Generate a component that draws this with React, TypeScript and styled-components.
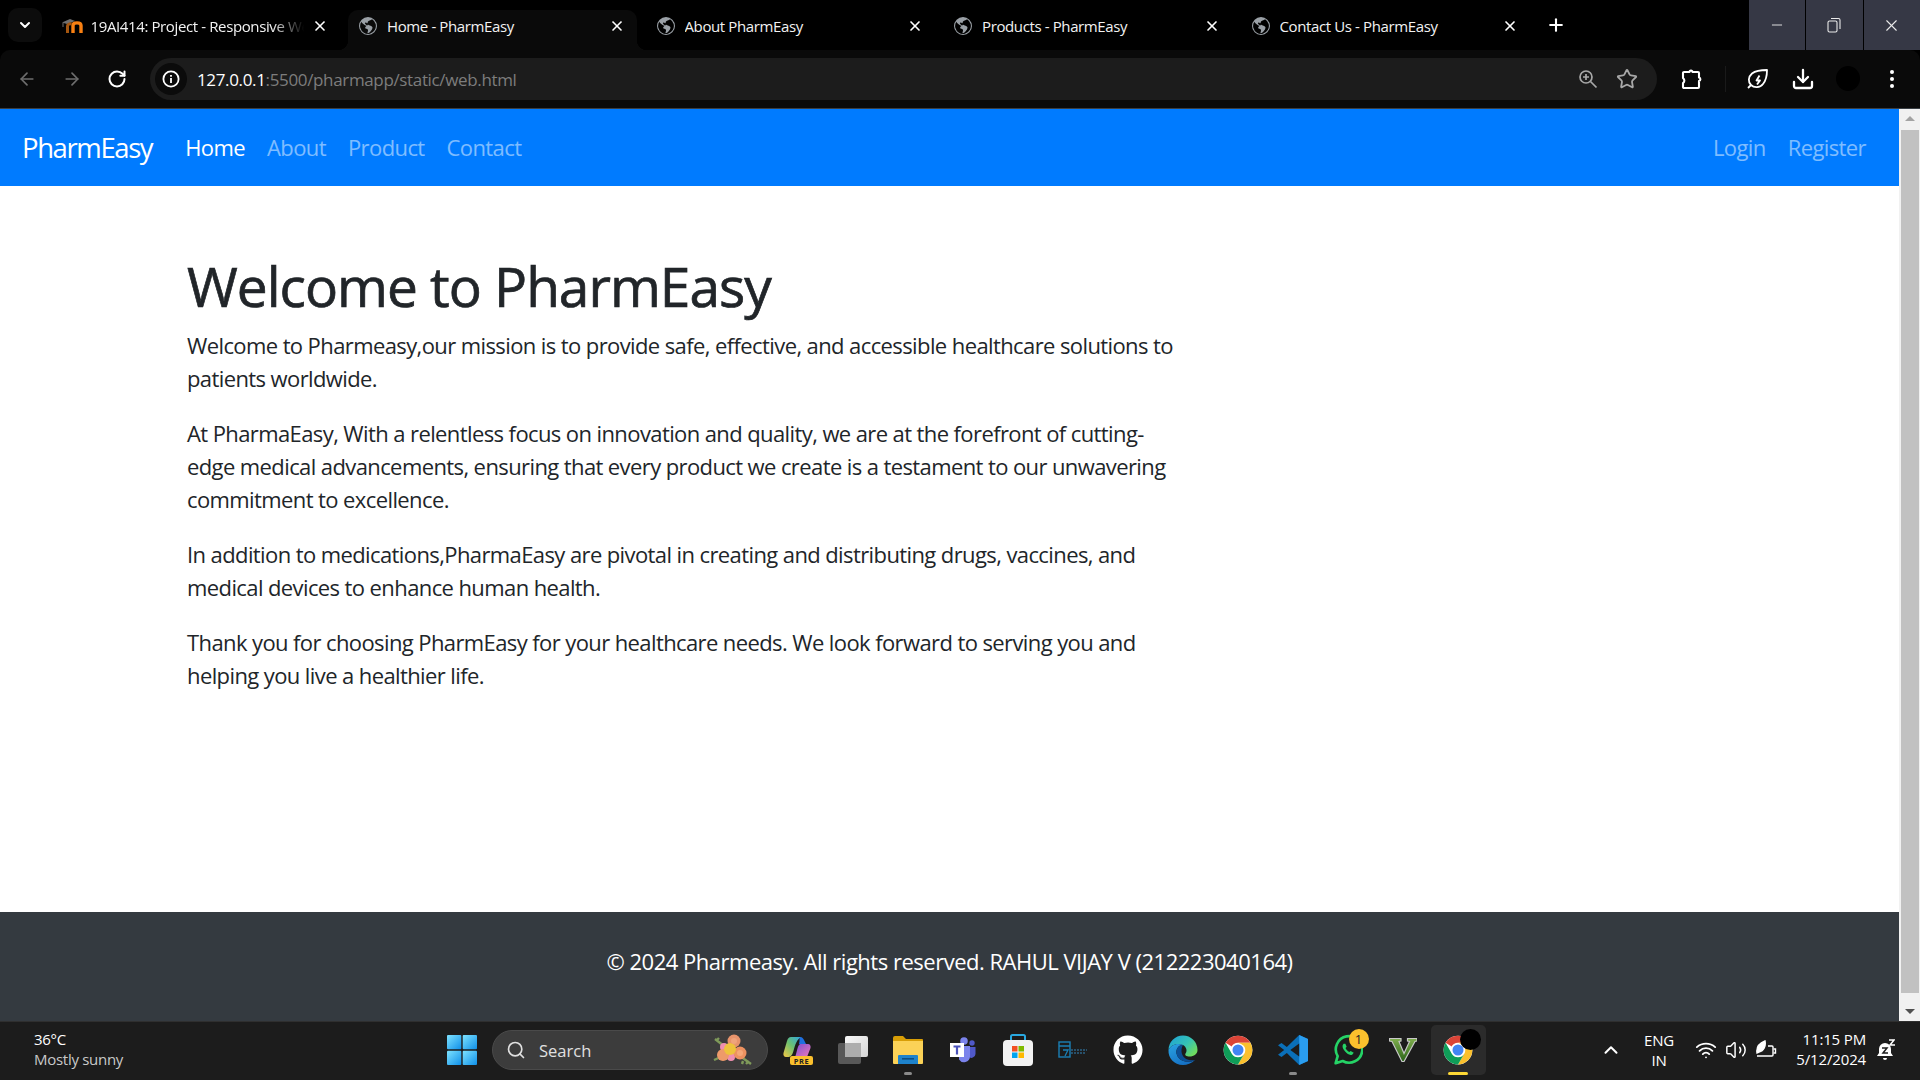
import React from "react";
import styled, { createGlobalStyle } from "styled-components";
import { ArrowLeft, ArrowRight, RotateCw, X, Plus, Minus, ChevronDown, ChevronUp, Search, Star, Download, Wifi, Volume2 } from "lucide-react";
import { BsGlobeAmericas } from "react-icons/bs";
import { FaGithub } from "react-icons/fa";

const SEGOE = `"Open Sans", "Noto Sans", "Liberation Sans", sans-serif`;

const Global = createGlobalStyle`
  html, body { margin: 0; padding: 0; background: #000; overflow: hidden; }
  * { box-sizing: border-box; }
  body { font-family: ${SEGOE}; }
`;

const Screen = styled.div`
  width: 1920px;
  height: 1080px;
  display: flex;
  flex-direction: column;
  overflow: hidden;
`;

const TabStrip = styled.div`
  height: 50px;
  background: #000;
  display: flex;
  align-items: flex-end;
  flex: none;
`;
const TabSearch = styled.div`
  width: 34px;
  height: 34px;
  margin: 0 8.5px 8px 8px;
  border-radius: 10px;
  background: #0c0c0c;
  color: #fff;
  display: flex;
  align-items: center;
  justify-content: center;
`;
const Tab = styled.div<{ $active?: boolean; $gap?: number }>`
  position: relative;
  width: 289px;
  height: 40px;
  margin-right: 8.5px;
  display: flex;
  align-items: center;
  padding: 0 12px 9px 11px;
  color: #f2f2f2;
  background: ${(p) => (p.$active ? "#0a0a0a" : "transparent")};
  border-radius: 10px 10px 0 0;
  gap: ${(p) => p.$gap ?? 10}px;
  flex: none;
  ${(p) =>
    p.$active &&
    `
    &::before, &::after {
      content: "";
      position: absolute;
      bottom: 0;
      width: 10px;
      height: 10px;
    }
    &::before { left: -10px; background: radial-gradient(circle at 0 0, transparent 10px, #0a0a0a 10.5px); }
    &::after { right: -10px; background: radial-gradient(circle at 100% 0, transparent 10px, #0a0a0a 10.5px); }
  `}
`;
const TabTitle = styled.span<{ $fade?: boolean }>`
  flex: 1;
  font-size: 15px;
  letter-spacing: -0.38px;
  white-space: nowrap;
  overflow: hidden;
  ${(p) => p.$fade && "mask-image: linear-gradient(90deg, #000 85%, transparent 100%);"}
`;
const NewTab = styled.div`
  width: 44px;
  height: 34px;
  margin: 0 0 8px -4.5px;
  color: #fff;
  display: flex;
  align-items: center;
  justify-content: center;
`;
const WindowControls = styled.div`
  margin-left: auto;
  align-self: flex-start;
  display: flex;
  gap: 1px;
`;
const WinBtn = styled.div`
  width: 56.5px;
  height: 50px;
  background: #363845;
  color: #eaeaea;
  display: flex;
  align-items: center;
  justify-content: center;
`;

const Toolbar = styled.div`
  height: 59px;
  flex: none;
  background: #0a0a0a;
  border-bottom: 1px solid #3a3f44;
  border-radius: 10px 10px 0 0;
  display: flex;
  align-items: center;
  padding-bottom: 1px;
`;
const NavIcons = styled.div`
  width: 150px;
  display: flex;
  align-items: center;
  padding-left: 17px;
  gap: 25px;
  flex: none;
`;
const NavIcon = styled.span<{ $dim?: boolean }>`
  width: 20px;
  height: 20px;
  display: flex;
  color: ${(p) => (p.$dim ? "#6e6e6e" : "#fff")};
`;
const Omnibox = styled.div`
  width: 1507px;
  height: 42px;
  border-radius: 21px;
  background: #1c1c1c;
  display: flex;
  align-items: center;
  padding: 0 19px 0 5px;
  flex: none;
`;
const InfoChip = styled.span`
  width: 32px;
  height: 32px;
  border-radius: 50%;
  background: #0b0b0b;
  display: flex;
  align-items: center;
  justify-content: center;
  flex: none;
`;
const Url = styled.div`
  margin-left: 10px;
  padding-top: 2px;
  font-size: 17px;
  letter-spacing: -0.35px;
  color: #7d7d7d;
  flex: 1;
`;
const UrlHost = styled.span`
  color: #fff;
`;
const OmniIcons = styled.div`
  display: flex;
  align-items: center;
  gap: 18px;
  color: #a8a8a8;
`;
const ToolIcons = styled.div`
  flex: 1;
  display: flex;
  align-items: center;
  color: #fff;
`;
const ToolSlot = styled.span<{ $w: number }>`
  width: ${(p) => p.$w}px;
  display: flex;
  justify-content: center;
  align-items: center;
  flex: none;
`;
const ToolDivider = styled.span`
  width: 1px;
  height: 26px;
  background: #1a1a1a;
  flex: none;
`;
const Avatar = styled.span`
  width: 24px;
  height: 25px;
  border-radius: 50%;
  background: #000;
`;

const Viewport = styled.div`
  flex: 1;
  min-height: 0;
  display: flex;
`;
const Page = styled.div`
  flex: 1;
  min-width: 0;
  display: flex;
  flex-direction: column;
  background: #fff;
  color: #212529;
`;
const Navbar = styled.nav`
  height: 77px;
  flex: none;
  background: #007bff;
  display: flex;
  align-items: center;
  padding: 0 22px 2px;
`;
const Brand = styled.a`
  font-size: 27.5px;
  letter-spacing: -1.4px;
  color: #fff;
  margin-right: 22px;
  line-height: 1.5;
  padding-top: 3px;
`;
const NavLink = styled.a<{ $active?: boolean }>`
  font-size: 22px;
  letter-spacing: -0.6px;
  padding: 0 11px;
  color: ${(p) => (p.$active ? "#fff" : "rgba(255,255,255,.5)")};
`;
const NavRight = styled.div`
  margin-left: auto;
  display: flex;
`;
const Main = styled.main`
  flex: 1;
  padding: 67px 0 0 187px;
`;
const Content = styled.div`
  width: 990px;
`;
const Title = styled.h1`
  font-size: 55px;
  font-weight: 500;
  line-height: 66px;
  letter-spacing: -1px;
  margin: 0 0 10px;
  -webkit-text-stroke: 0.7px #212529;
`;
const Para = styled.p`
  font-size: 22px;
  line-height: 33px;
  letter-spacing: -0.6px;
  margin: 0 0 22px;
`;
const Footer = styled.footer`
  height: 109px;
  flex: none;
  background: #343a40;
  color: #fff;
  font-size: 22px;
  letter-spacing: -0.49px;
  line-height: 33px;
  text-align: center;
  padding-top: 33px;
`;
const Scrollbar = styled.div`
  width: 21px;
  flex: none;
  background: #f1f1f1;
  display: flex;
  flex-direction: column;
  align-items: center;
  padding: 7px 1px 7px 2px;
`;
const Arrow = styled.span<{ $down?: boolean }>`
  width: 0;
  height: 0;
  border-left: 5px solid transparent;
  border-right: 5px solid transparent;
  ${(p) => (p.$down ? "border-top: 5px solid #505050;" : "border-bottom: 5px solid #a3a3a3;")}
  flex: none;
`;
const Thumb = styled.div`
  width: 100%;
  flex: 1;
  margin: 9px 0 16px;
  background: #c1c1c1;
`;

const Taskbar = styled.div`
  height: 59px;
  flex: none;
  background: #1c1c1c;
  border-top: 1px solid #2f2f2f;
  display: flex;
  align-items: center;
  padding-bottom: 2px;
  color: #fff;
`;
const Weather = styled.div`
  width: 447px;
  padding-left: 34px;
  flex: none;
  font-size: 15px;
  line-height: 20px;
  letter-spacing: -0.28px;
  margin-top: -2px;
`;
const WeatherSub = styled.div`
  color: #c9c9c9;
`;
const WinLogo = styled.span`
  display: flex;
  flex: none;
  width: 30px;
  margin-right: 15px;
`;
const SearchBox = styled.div`
  width: 276px;
  height: 40px;
  flex: none;
  border-radius: 20px;
  background: #3c3c3c;
  border: 1px solid #4a4a4a;
  display: flex;
  align-items: center;
  padding: 0 14px 0 13px;
  gap: 13px;
  color: #e0e0e0;
  font-size: 16.5px;
`;
const SearchLabel = styled.span`
  flex: 1;
`;
const Dock = styled.div`
  display: flex;
  align-items: center;
  flex: none;
  margin-left: 2.5px;
`;
const DockItem = styled.div<{ $active?: boolean }>`
  position: relative;
  width: 55px;
  height: 50px;
  display: flex;
  align-items: center;
  justify-content: center;
  border-radius: 5px;
  background: ${(p) => (p.$active ? "#2b2b2b" : "transparent")};
`;
const Pip = styled.span<{ $active?: boolean }>`
  position: absolute;
  bottom: 0;
  left: 50%;
  transform: translateX(-50%);
  width: ${(p) => (p.$active ? 20 : 8)}px;
  height: 3px;
  border-radius: 2px;
  background: ${(p) => (p.$active ? "#fdd835" : "#8a8a8a")};
`;
const Badge = styled.span`
  position: absolute;
  top: 4px;
  right: 7px;
  width: 20px;
  height: 20px;
  border-radius: 50%;
  background: #fbc02d;
  color: #222;
  font-size: 13px;
  text-align: center;
  line-height: 20px;
`;
const Blot = styled.span`
  position: absolute;
  top: 4px;
  right: 5px;
  width: 21px;
  height: 21px;
  border-radius: 50%;
  background: #000;
`;
const Tray = styled.div`
  margin-left: auto;
  display: flex;
  align-items: center;
  flex: none;
`;
const Lang = styled.div`
  width: 60px;
  margin-left: 7px;
  text-align: center;
  font-size: 15px;
  line-height: 20px;
  letter-spacing: -0.2px;
`;
const TrayIcons = styled.div`
  display: flex;
  align-items: center;
  gap: 8px;
  margin-left: 6px;
`;
const Clock = styled.div`
  width: 85px;
  margin-left: 4px;
  margin-top: -2px;
  text-align: right;
  font-size: 15px;
  line-height: 20px;
  letter-spacing: -0.15px;
`;
const BellSlot = styled.span`
  display: flex;
  margin: 0 25px 0 11px;
`;

const Globe = () => <BsGlobeAmericas size={18} color="#9aa0a6" />;

const MoodleIcon = () => (
  <svg width="21" height="15" viewBox="0 0 21 15">
    <path d="M0 4.500L8 1l5 2-8 3z" fill="#6f6f6f" />
    <path d="M1 5v4" stroke="#6f6f6f" strokeWidth="1" />
    <path d="M5.500 15V8c0-1.500 2-2.500 4-2" fill="none" stroke="#a5560f" strokeWidth="3" />
    <path d="M11 15V7.500C11 4 19 4 19 7.500V15" fill="none" stroke="#f98012" strokeWidth="3.400" />
  </svg>
);

const ZoomGlass = () => (
  <svg width="20" height="20" viewBox="0 0 20 20" fill="none" stroke="#a8a8a8" strokeWidth="1.7">
    <circle cx="8" cy="8" r="6" />
    <path d="M12.500 12.500L18.500 18.500" />
    <path d="M8 5v6M5 8h6" />
  </svg>
);
const PuzzleIcon = () => (
  <svg width="22" height="24" viewBox="0 0 22 24" fill="none" stroke="#fff" strokeWidth="2.100" strokeLinejoin="round">
    <path d="M4 5h5.500a1.500 1.500 0 0 1 3 0H18a1 1 0 0 1 1 1v4.500a1.800 1.800 0 0 1 0 3.500V20a1 1 0 0 1-1 1H4a1 1 0 0 1-1-1v-4a3 3 0 0 0 0-5V6a1 1 0 0 1 1-1z" />
  </svg>
);
const LeafBolt = () => (
  <svg width="24" height="24" viewBox="0 0 24 24" fill="none" stroke="#fff" strokeWidth="1.800" strokeLinejoin="round">
    <path d="M21 3c-5 0-11 .5-15 3.500C2 10 2 15 5 18c3 3 9 3 12-1 3-3.500 4-9 4-14z" />
    <path d="M13.500 8.500l-3 5h3.500l-3 4" />
    <path d="M5 18l-3 3" />
  </svg>
);
const Dots = () => (
  <svg width="6" height="20" viewBox="0 0 6 20" fill="#fff">
    <circle cx="3" cy="3" r="2" />
    <circle cx="3" cy="10" r="2" />
    <circle cx="3" cy="17" r="2" />
  </svg>
);
const InfoIcon = () => (
  <svg width="18" height="18" viewBox="0 0 18 18" fill="none" stroke="#fff" strokeWidth="1.800">
    <circle cx="9" cy="9" r="7.600" />
    <path d="M9 8v5M9 5v1.800" />
  </svg>
);
const RestoreIcon = () => (
  <svg width="14" height="16" viewBox="0 0 14 16" fill="none" stroke="#eaeaea" strokeWidth="1.100">
    <rect x="1" y="4" width="9" height="11" rx="1.500" />
    <path d="M4 1.500h7.500a1.500 1.500 0 0 1 1.500 1.500v9" />
  </svg>
);

const WindowsLogo = () => (
  <svg width="30" height="30" viewBox="0 0 30 30">
    <defs>
      <linearGradient id="wg" x1="0" y1="0" x2="1" y2="1">
        <stop offset="0" stopColor="#7ee3ff" />
        <stop offset="1" stopColor="#0f8fe8" />
      </linearGradient>
    </defs>
    <rect x="0" y="0" width="14.300" height="14.300" rx="1" fill="url(#wg)" />
    <rect x="15.700" y="0" width="14.300" height="14.300" rx="1" fill="url(#wg)" />
    <rect x="0" y="15.700" width="14.300" height="14.300" rx="1" fill="url(#wg)" />
    <rect x="15.700" y="15.700" width="14.300" height="14.300" rx="1" fill="url(#wg)" />
  </svg>
);
const Flowers = () => (
  <svg width="40" height="34" viewBox="0 0 40 34">
    <path d="M2 6l9 7M3 8l3-3M1 27l9-4M38 31L27 23M33 31l3-3M30 28l-1 3M22 5l3 6" stroke="#7f9a5a" strokeWidth="2.400" fill="none" />
    <circle cx="11" cy="14" r="4" fill="#ef8fb0" />
    <circle cx="18" cy="24" r="4" fill="#ef8fb0" />
    <circle cx="21" cy="8" r="6.500" fill="#e8946c" />
    <circle cx="10" cy="22" r="6" fill="#ee9a6a" />
    <circle cx="27" cy="20" r="6.500" fill="#ed9260" />
    <circle cx="17" cy="16" r="6" fill="#eec33c" />
    <circle cx="21" cy="8" r="3" fill="#f0a47c" />
    <circle cx="27" cy="20" r="3" fill="#f5a878" />
  </svg>
);
const CopilotIcon = () => (
  <svg width="30" height="29" viewBox="0 0 30 29">
    <defs>
      <linearGradient id="cp1" x1="0" y1="1" x2="1" y2="0">
        <stop offset="0" stopColor="#f6c945" />
        <stop offset="0.5" stopColor="#6cc070" />
        <stop offset="1" stopColor="#2aa5e8" />
      </linearGradient>
      <linearGradient id="cp2" x1="0" y1="0" x2="1" y2="1">
        <stop offset="0" stopColor="#7b4fd6" />
        <stop offset="1" stopColor="#ee7ab5" />
      </linearGradient>
    </defs>
    <path d="M8 1h11c-4 1-6 5-8 12-1 4-2 7-5 8H3c-2 0-3-2-2.500-4L4 5c1-3 2-4 4-4z" fill="url(#cp1)" />
    <path d="M17 1c2 0 3 1 4 3l2 4H16c1-3 0-6 1-7z" fill="#1f6fe0" />
    <path d="M17 8h8c2 0 3 2 2.500 4L24 21H12c2-4 2-11 5-13z" fill="url(#cp2)" />
    <rect x="7" y="20" width="23" height="9" rx="2" fill="#fbc02d" />
    <text x="18.500" y="27.500" textAnchor="middle" fontFamily="Open Sans, sans-serif" fontWeight="700" fontSize="7.500" fill="#222" letterSpacing="0.600">PRE</text>
  </svg>
);
const TaskViewIcon = () => (
  <svg width="30" height="28" viewBox="0 0 30 28">
    <defs>
      <linearGradient id="tv" x1="0" y1="0" x2="1" y2="1">
        <stop offset="0" stopColor="#f8f8f8" />
        <stop offset="1" stopColor="#d5d5d5" />
      </linearGradient>
    </defs>
    <rect x="0" y="7" width="23" height="21" rx="2" fill="#585858" />
    <rect x="7" y="0" width="23" height="21" rx="2" fill="url(#tv)" />
    <rect x="7" y="7" width="16" height="14" fill="#adadad" />
  </svg>
);
const ExplorerIcon = () => (
  <svg width="30" height="28" viewBox="0 0 30 28">
    <path d="M0 2a2 2 0 0 1 2-2h8l3 3h16a1 1 0 0 1 1 1v6H0z" fill="#d89e06" />
    <path d="M0 5h30v22a1 1 0 0 1-1 1H1a1 1 0 0 1-1-1z" fill="#fbd257" />
    <path d="M5 20a1 1 0 0 1 1-1h18a1 1 0 0 1 1 1v8H5z" fill="#1e83cc" />
    <rect x="9" y="22" width="12" height="1.600" fill="#0b4e84" />
  </svg>
);
const TeamsIcon = () => (
  <svg width="26" height="26" viewBox="0 0 26 26">
    <circle cx="14" cy="4" r="3.800" fill="#7b83eb" />
    <circle cx="22" cy="6" r="2.700" fill="#5059c9" />
    <path d="M18 10h7.500v7a4 4 0 0 1-7 2.500z" fill="#5059c9" />
    <path d="M9 9h11v10.500a6 6 0 0 1-11 3z" fill="#7b83eb" />
    <rect x="0" y="6" width="14" height="14" fill="#fff" />
    <path d="M3.500 9.500h7M7 9.500v8" stroke="#4b53bc" strokeWidth="2.200" />
  </svg>
);
const StoreIcon = () => (
  <svg width="30" height="32" viewBox="0 0 30 32">
    <path d="M8 7V2.500A1.500 1.500 0 0 1 9.500 1h11A1.500 1.500 0 0 1 22 2.500V7" fill="none" stroke="#29a8e0" strokeWidth="2" />
    <rect x="0" y="6" width="30" height="26" rx="4" fill="#f2f2f2" />
    <rect x="9" y="12" width="5.500" height="5.500" fill="#f25022" />
    <rect x="15.500" y="12" width="5.500" height="5.500" fill="#7fba00" />
    <rect x="9" y="18.500" width="5.500" height="5.500" fill="#00a4ef" />
    <rect x="15.500" y="18.500" width="5.500" height="5.500" fill="#ffb900" />
  </svg>
);
const ZipIcon = () => (
  <svg width="30" height="18" viewBox="0 0 30 18">
    <rect x="1" y="1" width="11" height="15" fill="none" stroke="#1a7fb5" strokeWidth="1.400" />
    <path d="M1 5h11M5 9h5l-3 6" fill="none" stroke="#1a7fb5" strokeWidth="1.300" />
    <path d="M13 9h16M13 12h14" stroke="#27506b" strokeWidth="2" strokeDasharray="2 1" />
  </svg>
);
const EdgeIcon = () => (
  <svg width="30" height="30" viewBox="0 0 30 30">
    <defs>
      <linearGradient id="eg1" x1="0" y1="0" x2="1" y2="0.700">
        <stop offset="0" stopColor="#1d9fd8" />
        <stop offset="0.600" stopColor="#35c3b5" />
        <stop offset="1" stopColor="#6fdc5e" />
      </linearGradient>
      <linearGradient id="eg2" x1="0" y1="0" x2="0.600" y2="1">
        <stop offset="0" stopColor="#2aa3e2" />
        <stop offset="1" stopColor="#1570c4" />
      </linearGradient>
    </defs>
    <path d="M.5 15a14.500 14.500 0 0 1 29 0c0 4-3.500 6.500-8 6.500-3 0-5-1-4-3 2-2.500 1-6.500-2.500-8.500C9 7.500 3 10 .5 15z" fill="url(#eg1)" />
    <path d="M.5 15C3 10 9 7.500 15 10c-5 0-8 5-6 10 2 6 11 9 18 5-3.500 3.500-8 5-12 5C6 30 0 23 .5 15z" fill="url(#eg2)" />
    <path d="M15 10c-5 0-8 5-6 10 2 6 11 9 18 5-4 1-11 0-13-6-1-3-.5-6.500 1-9z" fill="#0c4f96" />
  </svg>
);
const ChromeIcon = () => (
  <svg width="30" height="30" viewBox="0 0 48 48">
    <circle cx="24" cy="24" r="23" fill="#fff" />
    <path d="M24 1a23 23 0 0 1 19.900 11.500H24a11.500 11.500 0 0 0-10 5.800L4.100 12.500A23 23 0 0 1 24 1z" fill="#db4437" />
    <path d="M43.900 12.500A23 23 0 0 1 24 47l10-17.200a11.500 11.500 0 0 0 0-11.500L24 12.500z" fill="#fbc02d" />
    <path d="M4.100 12.500l10 17.300A11.500 11.500 0 0 0 24 35.500a11.500 11.500 0 0 0 10-5.700L24 47A23 23 0 0 1 4.100 12.500z" fill="#0f9d58" />
    <circle cx="24" cy="24" r="11" fill="#fff" />
    <circle cx="24" cy="24" r="8.800" fill="#4285f4" />
  </svg>
);
const VsCodeIcon = () => (
  <svg width="30" height="30" viewBox="0 0 34 34">
    <path d="M24 0l10 4.500v25L24 34 10 20.500l-6 4.500-4-2.500L7 17 0 11.500 4 9l6 4.500z" fill="#0a6fb8" />
    <path d="M24 0l10 4.500v25L24 34z" fill="#2a9df0" />
    <path d="M24 9.500v15L14 17z" fill="#1c1c1c" />
  </svg>
);
const WhatsappIcon = () => (
  <svg width="30" height="32" viewBox="0 0 34 36" fill="none">
    <path d="M3 33l2.300-8A15 15 0 1 1 11 30.500z" stroke="#25d366" strokeWidth="3" strokeLinejoin="round" />
    <path d="M12 11c-2 2-1.500 5 1.500 8.500s6 5 8.500 3.500l1.500-2-3.500-2-1.500 1.200c-2-1-3.500-2.700-4.300-4.500l1.300-1.400-1.500-3.500z" fill="#25d366" />
  </svg>
);
const VIcon = () => (
  <svg width="28" height="24" viewBox="0 0 28 24">
    <defs>
      <linearGradient id="vg" x1="0" y1="0" x2="0" y2="1">
        <stop offset="0" stopColor="#7fae4d" />
        <stop offset="1" stopColor="#2a6318" />
      </linearGradient>
    </defs>
    <path d="M.5.500h11.500v2.500l-2 .5 5 12 5.500-12-2-.5V.500h9.500v2.500l-2 .5L15 23.500h-2L3 3.500.5 3z" fill="url(#vg)" stroke="#c8c8c8" strokeWidth="1.200" />
  </svg>
);
const BatteryLeaf = () => (
  <svg width="22" height="20" viewBox="0 0 22 20" fill="none" stroke="#fff" strokeWidth="1.400">
    <path d="M2 16h15a1 1 0 0 0 1-1V7a1 1 0 0 0-1-1h-4" />
    <path d="M18.500 9h2v4h-2" />
    <path d="M2 13C1 7 5 3 10 1c1 5-1 10-6 11z" fill="#fff" />
  </svg>
);
const SleepBell = () => (
  <svg width="18" height="22" viewBox="0 0 18 22" fill="#fff">
    <path d="M8 4a6 6 0 0 0-6 6v4l-2 3h16l-2-3v-4a6 6 0 0 0-6-6z" />
    <path d="M6 19h4a2 2 0 0 1-4 0z" />
    <path d="M5 9h5l-4 5h5" fill="none" stroke="#1c1c1c" strokeWidth="1.500" />
    <path d="M12 1h5l-4 5h5" fill="none" stroke="#fff" strokeWidth="1.500" />
  </svg>
);

const tabs = ["Home - PharmEasy", "About PharmEasy", "Products - PharmEasy", "Contact Us - PharmEasy"];
const dock: { key: string; icon: React.ReactNode; pip?: boolean; badge?: string }[] = [
  { key: "copilot", icon: <CopilotIcon /> },
  { key: "tasks", icon: <TaskViewIcon /> },
  { key: "explorer", icon: <ExplorerIcon />, pip: true },
  { key: "teams", icon: <TeamsIcon /> },
  { key: "store", icon: <StoreIcon /> },
  { key: "zip", icon: <ZipIcon /> },
  { key: "github", icon: <FaGithub size={30} color="#fff" /> },
  { key: "edge", icon: <EdgeIcon /> },
  { key: "chrome", icon: <ChromeIcon /> },
  { key: "vscode", icon: <VsCodeIcon />, pip: true },
  { key: "whatsapp", icon: <WhatsappIcon />, badge: "1" },
  { key: "v", icon: <VIcon /> },
];

export default function App() {
  return (
    <Screen>
      <Global />
      <TabStrip>
        <TabSearch>
          <ChevronDown size={16} strokeWidth={3} />
        </TabSearch>
        <Tab $gap={8}>
          <MoodleIcon />
          <TabTitle $fade>19AI414: Project - Responsive Web</TabTitle>
          <X size={16} strokeWidth={2.5} color="#fff" />
        </Tab>
        {tabs.map((t, i) => (
          <Tab key={t} $active={i === 0}>
            <Globe />
            <TabTitle>{t}</TabTitle>
            <X size={16} strokeWidth={2.5} color="#fff" />
          </Tab>
        ))}
        <NewTab>
          <Plus size={20} strokeWidth={2.5} />
        </NewTab>
        <WindowControls>
          <WinBtn>
            <Minus size={16} strokeWidth={1.4} />
          </WinBtn>
          <WinBtn>
            <RestoreIcon />
          </WinBtn>
          <WinBtn>
            <X size={19} strokeWidth={1.4} />
          </WinBtn>
        </WindowControls>
      </TabStrip>

      <Toolbar>
        <NavIcons>
          <NavIcon $dim>
            <ArrowLeft size={20} />
          </NavIcon>
          <NavIcon $dim>
            <ArrowRight size={20} />
          </NavIcon>
          <NavIcon>
            <RotateCw size={20} strokeWidth={2.4} />
          </NavIcon>
        </NavIcons>
        <Omnibox>
          <InfoChip>
            <InfoIcon />
          </InfoChip>
          <Url>
            <UrlHost>127.0.0.1</UrlHost>:5500/pharmapp/static/web.html
          </Url>
          <OmniIcons>
            <ZoomGlass />
            <Star size={22} strokeWidth={2} />
          </OmniIcons>
        </Omnibox>
        <ToolIcons>
          <ToolSlot $w={68}>
            <PuzzleIcon />
          </ToolSlot>
          <ToolDivider />
          <ToolSlot $w={63}>
            <LeafBolt />
          </ToolSlot>
          <ToolSlot $w={28}>
            <Download size={24} strokeWidth={2.3} />
          </ToolSlot>
          <ToolSlot $w={62}>
            <Avatar />
          </ToolSlot>
          <ToolSlot $w={26}>
            <Dots />
          </ToolSlot>
        </ToolIcons>
      </Toolbar>

      <Viewport>
        <Page>
          <Navbar>
            <Brand>PharmEasy</Brand>
            <NavLink $active>Home</NavLink>
            <NavLink>About</NavLink>
            <NavLink>Product</NavLink>
            <NavLink>Contact</NavLink>
            <NavRight>
              <NavLink>Login</NavLink>
              <NavLink>Register</NavLink>
            </NavRight>
          </Navbar>
          <Main>
            <Content>
              <Title>Welcome to PharmEasy</Title>
              <Para>
                Welcome to Pharmeasy,our mission is to provide safe, effective, and accessible healthcare solutions to patients worldwide.
              </Para>
              <Para>
                At PharmaEasy, With a relentless focus on innovation and quality, we are at the forefront of cutting-edge medical advancements, ensuring that every product we create is a testament to our unwavering commitment to excellence.
              </Para>
              <Para>
                In addition to medications,PharmaEasy are pivotal in creating and distributing drugs, vaccines, and medical devices to enhance human health.
              </Para>
              <Para>
                Thank you for choosing PharmEasy for your healthcare needs. We look forward to serving you and helping you live a healthier life.
              </Para>
            </Content>
          </Main>
          <Footer>© 2024 Pharmeasy. All rights reserved. RAHUL VIJAY V (212223040164)</Footer>
        </Page>
        <Scrollbar>
          <Arrow />
          <Thumb />
          <Arrow $down />
        </Scrollbar>
      </Viewport>

      <Taskbar>
        <Weather>
          36°C
          <WeatherSub>Mostly sunny</WeatherSub>
        </Weather>
        <WinLogo>
          <WindowsLogo />
        </WinLogo>
        <SearchBox>
          <Search size={20} strokeWidth={2} />
          <SearchLabel>Search</SearchLabel>
          <Flowers />
        </SearchBox>
        <Dock>
          {dock.map((d) => (
            <DockItem key={d.key}>
              {d.icon}
              {d.pip && <Pip />}
              {d.badge && <Badge>{d.badge}</Badge>}
            </DockItem>
          ))}
          <DockItem $active>
            <ChromeIcon />
            <Blot />
            <Pip $active />
          </DockItem>
        </Dock>
        <Tray>
          <ChevronUp size={22} strokeWidth={2.2} />
          <Lang>
            ENG
            <br />
            IN
          </Lang>
          <TrayIcons>
            <Wifi size={22} strokeWidth={2} />
            <Volume2 size={22} strokeWidth={1.6} />
            <BatteryLeaf />
          </TrayIcons>
          <Clock>
            11:15 PM
            <br />
            5/12/2024
          </Clock>
          <BellSlot>
            <SleepBell />
          </BellSlot>
        </Tray>
      </Taskbar>
    </Screen>
  );
}
